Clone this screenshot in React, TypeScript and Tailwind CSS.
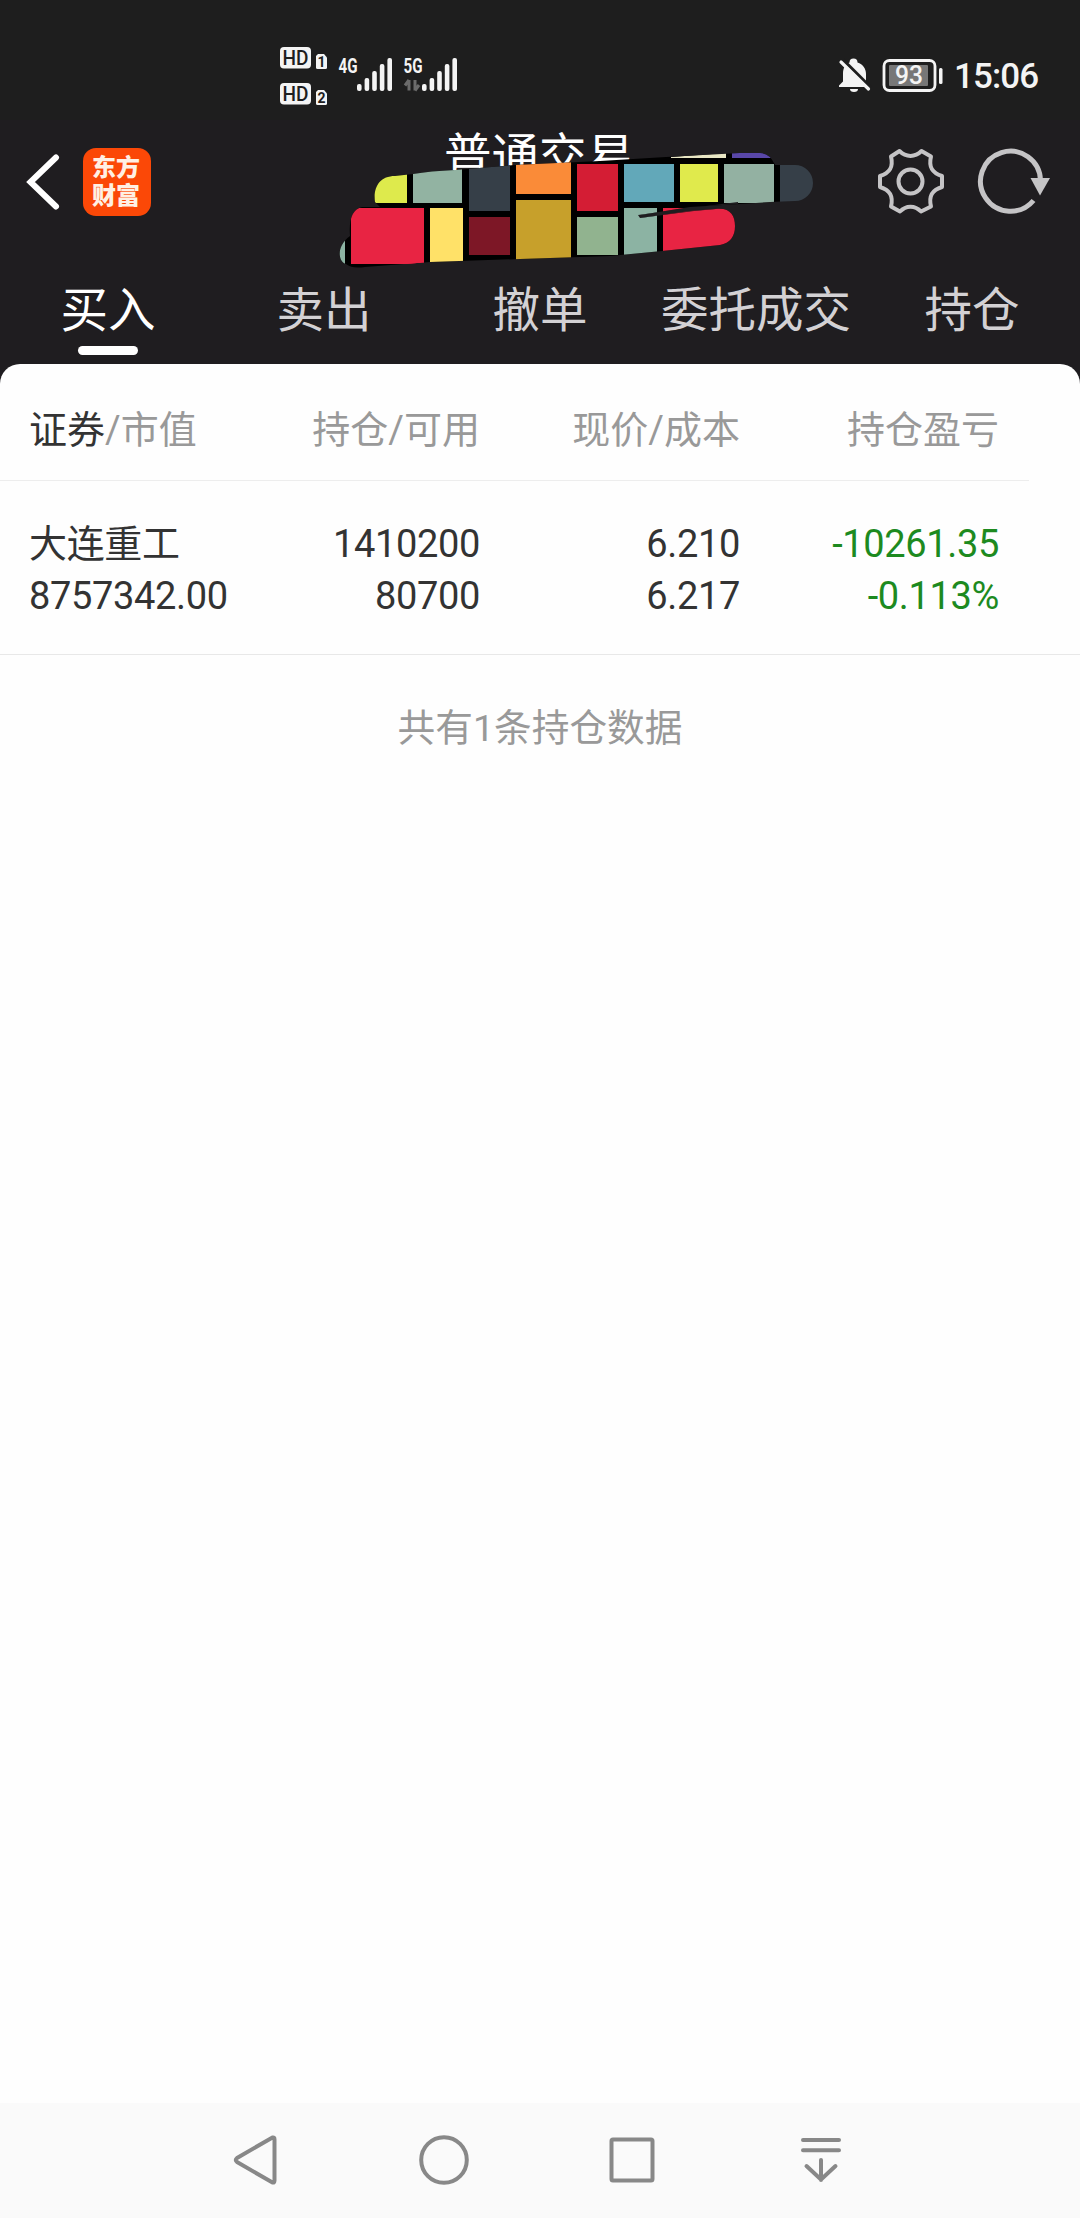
import type { ReactNode } from "react";

const tabs = ["买入", "卖出", "撤单", "委托成交", "持仓"];

export default function App() {
  return (
    <div className="flex h-[2218px] w-[1080px] flex-col overflow-hidden bg-[#1f1d20] font-[Roboto,'Noto_Sans_CJK_SC',sans-serif]">
      <StatusBar />
      <TitleBar />
      <Tabs active="买入" />
      <main className="flex-1 rounded-t-[20px] bg-[#fefefe]">
        <Positions />
      </main>
      <NavBar />
    </div>
  );
}

function StatusBar() {
  return (
    <div className="flex h-[120px] shrink-0 items-start justify-between bg-[#1e1e1e] text-[#f4f4f4]">
      <svg className="ml-[260px] mt-[30px] h-[90px] w-[220px]" viewBox="0 0 220 90">
        <HdBadge y={17} sim="1" />
        <HdBadge y={53} sim="2" />
        <Signal x={97} label="4G" />
        <Signal x={162} label="5G" />
        <path d="M149 50v10.500M149 50l-4 5.500M155 50v10.500M155 60.500l4-5.500" stroke="#6b6b6b" strokeWidth="3" fill="none" />
      </svg>
      <div className="flex">
        <svg className="mt-10 h-[70px] w-[126px]" viewBox="0 0 126 70">
          {/* muted bell */}
          <path d="M29.500 22.500a4 4 0 0 1 8 0C43 24.500 46 28.500 46 34v9l3 4H19v-1.500l4-4V34c0-6 2-9.500 6.500-11.500z" fill="#f4f4f4" />
          <path d="M30 49h8a4 3 0 0 1-8 0z" fill="#f4f4f4" />
          <path d="M23 20l27.500 27.500" stroke="#1e1e1e" strokeWidth="3.500" />
          <path d="M21 22l27.500 27" stroke="#f4f4f4" strokeWidth="3.200" strokeLinecap="round" />
          {/* battery */}
          <rect x="64" y="20.500" width="51" height="30" rx="5.500" fill="none" stroke="#f4f4f4" strokeWidth="2.800" />
          <rect x="69" y="25" width="39" height="21" rx="1" fill="#777" />
          <rect x="119" y="28" width="3.500" height="16" rx="1.500" fill="#f4f4f4" />
          <text x="89" y="44" textAnchor="middle" fontSize="26" fontWeight="500" fill="#f4f4f4" textLength="28" lengthAdjust="spacingAndGlyphs">93</text>
        </svg>
        <span className="mt-[53px] mr-[42px] w-[92px] pl-2 text-[35px] leading-[48px] font-medium tracking-[-0.9px] whitespace-nowrap">15:06</span>
      </div>
    </div>
  );
}

function HdBadge({ y, sim }: { y: number; sim: string }) {
  return (
    <g>
      <rect x="20" y={y} width="31" height="21.500" rx="4" fill="#f4f4f4" />
      <text x="35.500" y={y + 17.800} textAnchor="middle" fontSize="20" fontWeight="500" fill="#1e1e1e" textLength="26" lengthAdjust="spacingAndGlyphs">HD</text>
      <path d={`M58 ${y + 7}h6l3 3.500v10q0 1.500-1.500 1.500h-8q-1.500 0-1.500-1.500v-11.500z`} fill="#f4f4f4" />
      <text x="61.500" y={y + 19.500} textAnchor="middle" fontSize="14" fontWeight="700" fill="#1e1e1e">{sim}</text>
    </g>
  );
}

function Signal({ x, label }: { x: number; label: string }) {
  return (
    <g>
      <text x={x - 18.500} y="42.500" fontSize="20" fontWeight="700" fill="#f4f4f4" textLength="19" lengthAdjust="spacingAndGlyphs">{label}</text>
      {[7, 13, 20, 27, 33].map((h, i) => (
        <rect key={h} x={x + i * 7.600} y={61 - h} width="4.600" height={h} rx="2" fill="#f4f4f4" />
      ))}
    </g>
  );
}

function TitleBar() {
  return (
    <header className="flex h-[150px] shrink-0 items-start">
      <svg className="mt-[34px] ml-[26px] h-[56px] w-[34px]" viewBox="0 0 34 56" fill="none" stroke="#fff" strokeWidth="6">
        <path d="M30 3.500L4.500 28l25.500 24.500" strokeLinecap="round" />
      </svg>
      <div className="mt-7 ml-[23px] flex h-[68px] w-[68px] flex-col items-center justify-center rounded-[13px] bg-[#fb4807] pr-0.5 pb-px text-[24px] leading-[28px] font-black text-[#fff0e4]">
        <span>东方</span>
        <span>财富</span>
      </div>
      <div className="relative ml-[169px] h-[150px] w-[510px]">
        <h1 className="absolute top-[9px] left-[124px] text-[47.500px] leading-[56px] whitespace-nowrap text-white">普通交易</h1>
        <Scribble />
      </div>
      <svg className="mt-[10px] ml-[30px] h-[100px] w-[220px]" viewBox="0 0 220 100" fill="none" stroke="#c5c4c6" strokeWidth="4">
        <path d="M39.500 21L31 26.500C33.500 37 30 43 20 46V57C30 60 33.500 66 31 76.500L40 81.500C46 75 55 75 61 81.500L71 76.500C68.500 66 72 60 82 57V46C72 43 68.500 37 71 26.500L61.500 21C55 27.500 46 27.500 39.500 21Z" strokeLinejoin="round" />
        <circle cx="50.500" cy="51.500" r="12" />
        <path d="M173.500 70.500a30 30 0 1 1 7-20" strokeWidth="5" />
        <path d="M170.500 48h19.500l-10 17.500z" fill="#c5c4c6" stroke="none" />
      </svg>
    </header>
  );
}

// coloured brush stroke painted over the account name
function Scribble() {
  return (
    <svg className="absolute top-0 left-0 h-[150px] w-[510px]" viewBox="320 120 510 150">
      <defs>
        <clipPath id="stroke">
          <path d="M375 202C373 188 379 176 395 176L413 174Q430 171 455 170L515 165L600 161L666 157L740 153L760 153Q770 153 775 165H795A18 18 0 0 1 795 201L770 202L690 207L640 215L640 218L690 211L715 209C730 207 735 215 735 226Q735 242 720 245L662 251L610 256L520 259L430 262L365 267Q352 269 346 264C338 262 336 246 350 236Q348 210 362 207L380 207Z" />
        </clipPath>
      </defs>
      <g clipPath="url(#stroke)">
        <rect x="320" y="145" width="455" height="125" fill="#000" />
        <rect x="374" y="170" width="33" height="33" fill="#deea4c" />
        <rect x="413" y="168" width="49" height="35" fill="#92b3a2" />
        <rect x="469" y="160" width="41" height="51" fill="#363f48" />
        <rect x="516" y="160" width="55" height="34" fill="#fa8b38" />
        <rect x="577" y="164" width="41" height="47" fill="#d41d34" />
        <rect x="624" y="164" width="50" height="38" fill="#62a8b9" />
        <rect x="680" y="164" width="38" height="38" fill="#e0ea4c" />
        <rect x="724" y="164" width="50" height="39" fill="#93b1a2" />
        <rect x="774" y="160" width="6" height="45" fill="#000" />
        <rect x="780" y="160" width="35" height="45" fill="#363f48" />
        <path d="M671 157l55-4v5h-55z" fill="#e8e6c4" />
        <rect x="732" y="150" width="40" height="8" fill="#5947a8" />
        <rect x="330" y="235" width="15" height="33" fill="#8bb3a2" />
        <rect x="351" y="208" width="73" height="56" rx="8" fill="#e82443" />
        <rect x="351" y="240" width="73" height="24" fill="#e82443" />
        <rect x="400" y="208" width="24" height="56" fill="#e82443" />
        <rect x="430" y="208" width="33" height="56" fill="#ffe168" />
        <rect x="469" y="217" width="41" height="38" fill="#7d1726" />
        <rect x="516" y="200" width="55" height="60" fill="#c7a02b" />
        <rect x="577" y="217" width="41" height="38" fill="#91b38f" />
        <rect x="624" y="208" width="33" height="50" fill="#8cb3a3" />
        <rect x="663" y="208" width="80" height="45" fill="#e82443" />
        <path d="M638 215L706 206L738 202V207L694 211L640 218Z" fill="#1f1d20" />
      </g>
    </svg>
  );
}

function Tabs({ active }: { active: string }) {
  return (
    <nav className="grid h-[94px] shrink-0 grid-cols-5">
      {tabs.map((tab) => (
        <div key={tab} className="flex flex-col items-center">
          <span className={`mt-[11px] text-[47.500px] leading-[60px] whitespace-nowrap ${tab === active ? "text-white" : "text-[#d3d1d4]"}`}>{tab}</span>
          {tab === active && <span className="mt-[5px] h-[9px] w-[60px] rounded-full bg-white" />}
        </div>
      ))}
    </nav>
  );
}

function Row({ children, className }: { children: ReactNode; className: string }) {
  return <div className={`grid grid-cols-[211px_240px_260px_259px] pl-[29px] text-[38px] *:not-first:text-right ${className}`}>{children}</div>;
}

function Positions() {
  return (
    <section className="text-[#333]">
      <Row className="h-[116px] items-center pt-[17px] text-[#999]">
        <span><span className="text-[#333]">证券</span>/市值</span>
        <span>持仓/可用</span>
        <span>现价/成本</span>
        <span>持仓盈亏</span>
      </Row>
      <div className="h-px w-[1029px] bg-[#ededed]" />
      <Row className="h-[173px] pt-[37px] leading-[52px] tracking-[-0.35px]">
        <div><p>大连重工</p><p>8757342.00</p></div>
        <div><p>1410200</p><p>80700</p></div>
        <div><p>6.210</p><p>6.217</p></div>
        <div className="text-[#1d8a1f]"><p>-10261.35</p><p>-0.113%</p></div>
      </Row>
      <div className="h-px bg-[#e8e8e8]" />
      <p className="mt-[47px] text-center text-[37.700px] leading-[52px] text-[#999]">共有1条持仓数据</p>
    </section>
  );
}

function NavBar() {
  return (
    <footer className="flex h-[115px] shrink-0 justify-center bg-[#fafafa]">
      <svg className="h-[115px] w-[1080px]" viewBox="0 2103 1080 115" fill="none" stroke="#888" strokeWidth="4" strokeLinecap="round" strokeLinejoin="round">
        <path d="M272.500 2137.500L237 2158q-2.500 2 0 4L272.500 2182.500q2 .5 2-2V2139.500q0-2.500-2-2z" />
        <circle cx="444" cy="2160" r="22.800" />
        <rect x="611.500" y="2139.500" width="41" height="41" rx="1.500" />
        <path d="M803 2140h36M803 2150.300h36M821 2160v20M806.500 2166L821 2179.500L835.500 2166" />
      </svg>
    </footer>
  );
}
